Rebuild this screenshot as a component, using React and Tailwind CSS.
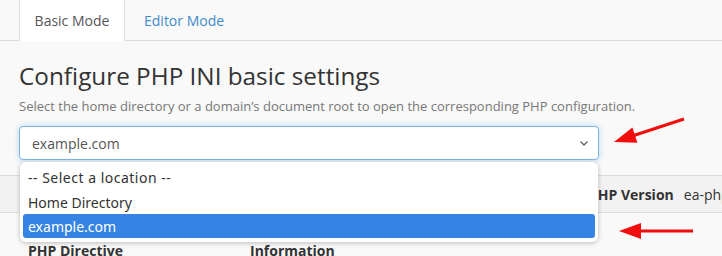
import React from 'react';

function Arrow({ x1, y1, x2, y2 }) {
  // line from (x1,y1) to tip (x2,y2)
  const dx = x2 - x1;
  const dy = y2 - y1;
  const len = Math.hypot(dx, dy);
  const ux = dx / len;
  const uy = dy / len;
  const hl = 22;
  const hw = 8;
  const bx = x2 - ux * hl;
  const by = y2 - uy * hl;
  const p1 = `${bx - uy * hw},${by + ux * hw}`;
  const p2 = `${bx + uy * hw},${by - ux * hw}`;
  return (
    <g>
      <line x1={x1} y1={y1} x2={bx + ux * 2} y2={by + uy * 2} stroke="#f20d0d" strokeWidth="3" />
      <polygon points={`${x2},${y2} ${p1} ${p2}`} fill="#f20d0d" />
    </g>
  );
}

export default function App() {
  return (
    <div className="relative w-[722px] h-[256px] overflow-hidden bg-[#f9f9f9] font-['Open_Sans',sans-serif]">
      <div className="flex h-[41px] pl-[19px] border-b border-[#dddddd]">
        <div className="w-[106px] h-[41px] bg-white border-l border-r border-[#dddddd] flex items-center justify-center text-[14px] text-[#555555]">
          Basic Mode
        </div>
        <div className="px-[19px] flex items-center text-[14px] text-[#428bca]">Editor Mode</div>
      </div>

      <div className="px-[19px] pt-[18px]">
        <h1 className="text-[24.3px] leading-[33px] text-[#333333]">Configure PHP INI basic settings</h1>
        <p className="mt-[5px] text-[13px] leading-[18px] text-[#777777]">
          Select the home directory or a domain’s document root to open the corresponding PHP configuration.
        </p>
        <div className="mt-[11px] w-[580px] h-[34px] bg-white border border-[#7fb2e5] rounded-[4px] shadow-[0_0_6px_rgba(102,175,233,0.45)] flex items-center justify-between pl-[12px] pr-[8px] text-[14px] text-[#555555]">
          <span>example.com</span>
          <svg width="12" height="12" viewBox="0 0 12 12">
            <path d="M2.5 4.5 L6 8 L9.5 4.5" fill="none" stroke="#666" strokeWidth="1.3" />
          </svg>
        </div>
      </div>

      <div className="mt-[15px] h-[38px] bg-[#f2f2f2] border-t border-b border-[#dddddd] flex items-center whitespace-nowrap text-[14px] text-[#333333]">
        <span className="ml-[589px] shrink-0 font-bold">PHP Version</span>
        <span className="ml-[10px] shrink-0">ea-php81</span>
      </div>

      <div className="flex pt-[27px] text-[14px] font-bold text-[#333333]">
        <span className="ml-[28px] w-[222px]">PHP Directive</span>
        <span>Information</span>
      </div>

      <div className="absolute left-[20px] top-[162px] w-[578px] h-[80px] bg-white rounded-[6px] shadow-[0_1px_5px_rgba(0,0,0,0.25)] px-[3px] pt-[3px] font-['Noto_Sans',sans-serif] text-[14px] text-[#333333]">
        <div className="h-[25px] flex items-center pl-[5px] tracking-[0.5px]">-- Select a location --</div>
        <div className="h-[24px] flex items-center pl-[5px]">Home Directory</div>
        <div className="h-[24px] flex items-center pl-[5px] bg-[#3584e4] text-white rounded-[3px]">example.com</div>
      </div>

      <svg className="absolute left-0 top-0" width="722" height="256">
        <Arrow x1={684} y1={119} x2={614} y2={142} />
        <Arrow x1={693} y1={231} x2={619} y2={231} />
      </svg>
    </div>
  );
}
